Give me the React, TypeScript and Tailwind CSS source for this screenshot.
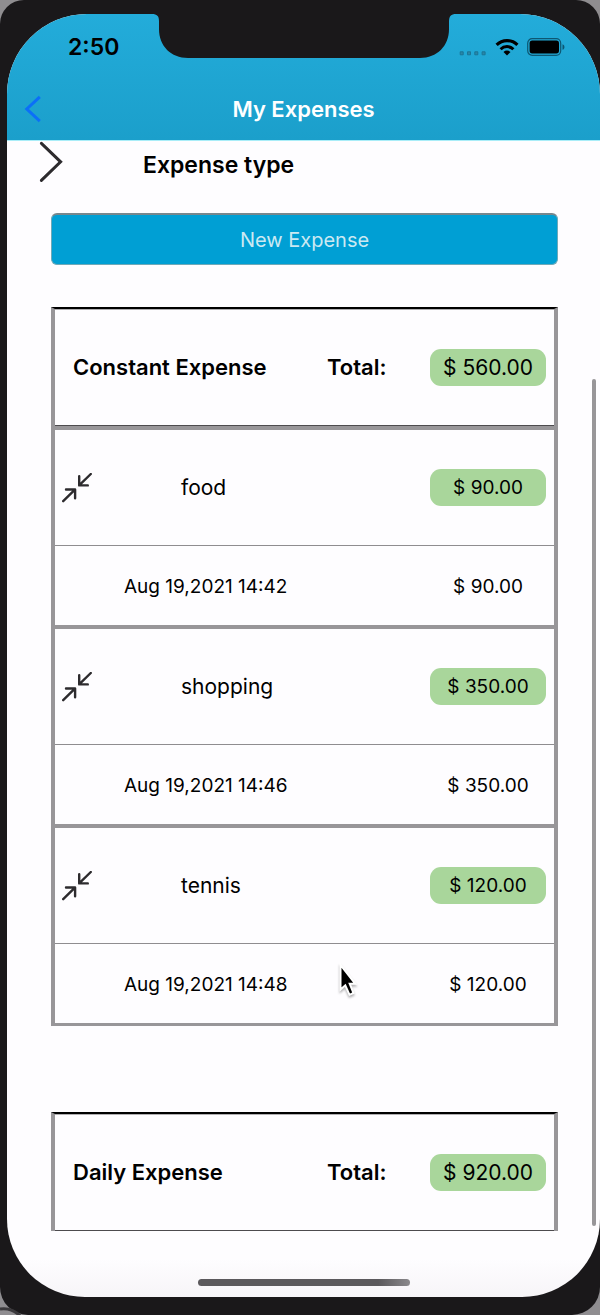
type Expense = { name: string; amount: string; date: string };

const constantExpenses: Expense[] = [
  { name: "food", amount: "$ 90.00", date: "Aug 19,2021 14:42" },
  { name: "shopping", amount: "$ 350.00", date: "Aug 19,2021 14:46" },
  { name: "tennis", amount: "$ 120.00", date: "Aug 19,2021 14:48" },
];

function Pill({ children, large = false }: { children: string; large?: boolean }) {
  return (
    <span
      className={`mx-auto flex h-[37px] w-[116px] items-center justify-center rounded-[11px] bg-[#a9d69b] pt-[2px] font-normal ${
        large ? "text-[21px]" : "text-[19px]"
      }`}
    >
      {children}
    </span>
  );
}

function CollapseIcon() {
  return (
    <svg viewBox="0 0 30 30" className="size-[30px]" fill="none" stroke="#2d2b2e" strokeWidth="2.4" strokeLinecap="round" strokeLinejoin="round" aria-hidden="true">
      <path d="M1.2 28.2 12.9 16.7M4 16.5h9.1v8.8" />
      <path d="M28.8 1 17.4 12.2M17.2 3.2v9.2h8.6" />
    </svg>
  );
}

function ExpenseTable({ title, total, items }: { title: string; total: string; items: Expense[] }) {
  return (
    <table
      className={`w-full table-fixed border-separate border-spacing-0 border-x-4 border-t-2 border-[#989699] border-t-black text-left ${
        items.length ? "border-b-3" : ""
      }`}
    >
      <colgroup>
        <col className="w-[69px]" />
        <col />
        <col className="w-[99px]" />
        <col className="w-[132px]" />
      </colgroup>
      <thead>
        <tr className="text-[22px] [&>th]:h-[117px] [&>th]:border-b [&>th]:border-b-[#4d4b4e] [&>th]:font-semibold [&>th]:shadow-[inset_0_1px_0_#b0aeb1]">
          <th colSpan={2} className="pl-[18px]">{title}</th>
          <th className="pl-1">Total:</th>
          <th><Pill large>{total}</Pill></th>
        </tr>
      </thead>
      {items.map((item) => (
        <tbody key={item.name}>
          <tr className="[&>td]:h-[120px] [&>td]:border-t-4 [&>td]:border-b [&>td]:border-t-[#989699] [&>td]:border-b-[#8f8d90]">
            <td className="pl-[7px]">
              <button type="button" aria-label={`Collapse ${item.name}`} className="block">
                <CollapseIcon />
              </button>
            </td>
            <td colSpan={2} className="pl-[57px] text-[21px]">{item.name}</td>
            <td><Pill>{item.amount}</Pill></td>
          </tr>
          <tr className="text-[19px] [&>td]:h-[79px] [&>td]:pt-[3px]">
            <td />
            <td colSpan={2}>{item.date}</td>
            <td className="text-center">{item.amount}</td>
          </tr>
        </tbody>
      ))}
    </table>
  );
}

function Notch() {
  return (
    <svg viewBox="0 0 304 45" className="absolute top-0 left-1/2 h-[45px] w-[304px] -translate-x-1/2" fill="#1a181a" aria-hidden="true">
      <path d="M0 0c5 0 7 2 7 7v8c0 17 12 29 29 29h232c17 0 29-12 29-29V8c0-6 2-8 7-8z" />
    </svg>
  );
}

function StatusIcons() {
  return (
    <div className="flex items-center" aria-hidden="true">
      <svg viewBox="0 0 28 20" className="h-5 w-7" fill="#2a87a8" stroke="#1a7698" strokeWidth="1">
        <path d="M1.2 14.8h3v3h-3zM8.5 14.8h3v3h-3zM15.8 14.8h3v3h-3zM23.1 14.8h3v3h-3z" />
      </svg>
      <svg viewBox="0 0 24 18" className="ml-2 h-[18px] w-6">
        <path d="M1.6 6.8a14.8 14.8 0 0 1 20.8 0" fill="none" stroke="#000" strokeWidth="3.2" />
        <path d="M5.6 11.2a9.1 9.1 0 0 1 12.8 0" fill="none" stroke="#000" strokeWidth="3" />
        <path d="M8.5 14a5 5 0 0 1 7 0L12 17.6z" />
      </svg>
      <svg viewBox="0 0 38 18" className="ml-2 h-[18px] w-[38px]">
        <rect x=".7" y=".7" width="33" height="16.6" rx="4.5" fill="none" stroke="#0d5772" strokeWidth="1.2" />
        <rect x="2.6" y="2.6" width="29.4" height="12.8" rx="2.6" />
        <path d="M35.5 6.2c2.6.7 2.6 4.9 0 5.6z" fill="#0d5772" />
      </svg>
    </div>
  );
}

export default function App() {
  return (
    <div className="relative min-h-screen overflow-hidden bg-[#8f8d90] font-['Inter','Liberation_Sans',sans-serif] text-black">
      <div className="min-h-screen rounded-t-[24px] rounded-b-[28px] bg-[#1a181a] pt-[14px] pb-[18px] pl-[7px]">
        <div className="relative overflow-hidden rounded-t-[80px] rounded-b-[78px] bg-linear-to-b from-[#fefdff] from-97% to-[#f7f5f8] pb-[66px]">
          <header className="flex h-[126px] flex-col justify-between bg-linear-to-b from-[#23acda] to-[#1b9fcb]">
            <Notch />
            <div className="flex h-[66px] items-center justify-between pr-[35px] pl-[61px]">
              <time className="text-[23px] font-semibold">2:50</time>
              <StatusIcons />
            </div>
            <div className="grid h-[60px] grid-cols-[1fr_auto_1fr] items-center px-[17px] pb-[2px]">
              <button type="button" aria-label="Back" className="w-fit">
                <svg viewBox="0 0 18 28" className="h-7 w-[18px]" fill="none" stroke="#0b6ff8" strokeWidth="3">
                  <path d="M15.8 1.8 2.8 14l13 12.2" />
                </svg>
              </button>
              <h1 className="text-[22px] font-semibold text-white">My Expenses</h1>
            </div>
          </header>

          <main className="border-t border-[#a9edf8] pr-[42px] pl-[44px]">
            <div className="-ml-3 flex h-[49px] items-center">
              <button type="button" aria-label="Show expense types" className="mr-[79px]">
                <svg viewBox="0 0 25 49" className="h-[49px] w-[25px]" fill="none" stroke="#2d2b2e" strokeWidth="3" strokeLinecap="round">
                  <path d="M2.4 2.4 21.6 20.8 2.4 39.4" />
                </svg>
              </button>
              <h2 className="text-[23px] font-semibold">Expense type</h2>
            </div>
            <button
              type="button"
              className="mt-[23px] block h-[52px] w-full rounded-md border border-t-2 border-[#6fa9b8] border-t-[#77878d] bg-[#009fd4] text-[20px] text-[#cbe9f2]"
            >
              New Expense
            </button>
            <div className="mt-[42px] flex flex-col gap-[86px]">
              <ExpenseTable title="Constant Expense" total="$ 560.00" items={constantExpenses} />
              <ExpenseTable title="Daily Expense" total="$ 920.00" items={[]} />
            </div>
          </main>

          <div className="absolute top-[365px] right-1 bottom-[71px] w-1 rounded-full bg-[#989699]" />
          <div className="absolute bottom-[11px] left-1/2 h-[7px] w-[212px] -translate-x-1/2 rounded-full bg-linear-to-r from-[#5b595c] from-85% to-[#8b898c]" />
          <svg viewBox="0 0 24 36" className="absolute top-[949px] left-[331px] h-9 w-6 drop-shadow-[0_2px_1px_rgba(0,0,0,0.3)]" aria-hidden="true">
            <path d="M2.5 2v24.5l4.8-4.2 4.2 9.5 4-1.8-3.8-9.2h5.6z" fill="#000" stroke="#fff" strokeWidth="2" />
          </svg>
        </div>
      </div>
      <svg viewBox="0 0 26 12" className="absolute bottom-0 left-0 h-3 w-[26px]" fill="none" stroke="#3b393c" strokeWidth="3" aria-hidden="true">
        <path d="M0 6c7-1 15 1 21 8" />
      </svg>
    </div>
  );
}
